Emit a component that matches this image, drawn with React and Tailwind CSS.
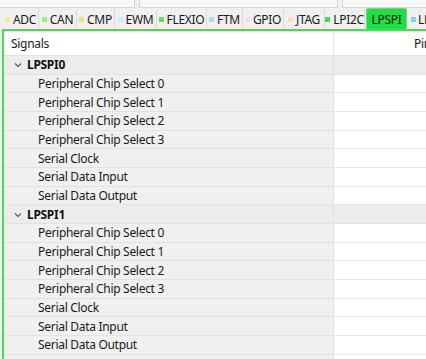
import React from "react";

const tabs = [
  { n: "ADC", c: "bg-[#eeee88]", w: "w-[36px]" },
  { n: "CAN", c: "bg-[#99ee88]", w: "w-[38px]" },
  { n: "CMP", c: "bg-[#eedd88]", w: "w-[38px]" },
  { n: "EWM", c: "bg-[#ccf0f8]", w: "w-[42px]" },
  { n: "FLEXIO", c: "bg-[#66dd55]", w: "w-[50px]" },
  { n: "FTM", c: "bg-[#aaddf8]", w: "w-[36px]" },
  { n: "GPIO", c: "bg-[#eeddf5]", w: "w-[41px]" },
  { n: "JTAG", c: "bg-[#f8dcc4]", w: "w-[41px]" },
  { n: "LPI2C", c: "bg-[#44dd44]", w: "w-[40px]" },
];

const signals = [
  "Peripheral Chip Select 0",
  "Peripheral Chip Select 1",
  "Peripheral Chip Select 2",
  "Peripheral Chip Select 3",
  "Serial Clock",
  "Serial Data Input",
  "Serial Data Output",
];

function Chevron() {
  return (
    <svg width="8" height="6" viewBox="0 0 8 6" className="mr-[5px]">
      <path d="M1 1.5 L4 4.5 L7 1.5" fill="none" stroke="#555" strokeWidth="1.1" />
    </svg>
  );
}

function Row({ children }) {
  return (
    <div className="flex h-[18.67px]">
      <div className="flex w-[330px] items-center border-r border-b border-[#e2e2e2] bg-[#f0f0f0] pt-[1px] pl-[34px] text-[#1a1a1a]">
        {children}
      </div>
      <div className="flex-1 border-b border-[#e6e6e6] bg-white" />
    </div>
  );
}

function Group({ name }) {
  return (
    <>
      <div className="flex h-[18.67px] border-b border-[#e2e2e2] bg-[#ececec]">
        <div className="flex w-[330px] items-center border-r border-[#e2e2e2] pt-[1px] pl-[10px] font-bold text-[#111]">
          <Chevron />
          {name}
        </div>
        <div className="flex-1" />
      </div>
      {signals.map((s) => (
        <Row key={s}>{s}</Row>
      ))}
    </>
  );
}

export default function App() {
  return (
    <div
      className="h-[359px] w-[426px] overflow-hidden bg-[#f0f0f0] text-[12px] leading-none tracking-[-0.3px]"
      style={{ fontFamily: '"Noto Sans", "Open Sans", sans-serif' }}
    >
      <div className="flex h-[8px]">
        <div className="w-[135px] border-r border-b border-[#d6d6d6] bg-[#f7f7f7]" />
        <div className="ml-[4px] w-[199px] border-r border-b border-l border-[#d6d6d6] bg-[#f7f7f7]" />
        <div className="ml-[4px] flex-1 border-b border-l border-[#d6d6d6] bg-[#f7f7f7]" />
      </div>
      <div className="flex h-[21px] items-end overflow-hidden pl-[3px]">
        {tabs.map((t) => (
          <div
            key={t.n}
            className={`flex h-[20px] shrink-0 items-center justify-center border-r border-[#d9d9d9] pt-[1px] text-[#1a1a1a] ${t.w}`}
          >
            <span className={`mr-[3px] inline-block h-[5px] w-[5px] ${t.c}`} />
            <span>{t.n}</span>
          </div>
        ))}
        <div className="ml-[1px] flex h-[21px] w-[41px] shrink-0 items-center justify-center rounded-t-[2px] border border-b-0 border-[#7fcf8a] bg-[#22dd44] pt-[1px] text-[#111]">
          LPSPI
        </div>
        <div className="flex h-[20px] shrink-0 items-center pt-[1px] pl-[4px] text-[#1a1a1a]">
          <span className="mr-[2px] inline-block h-[5px] w-[5px] bg-[#88ccf0]" />
          <span>LPUART</span>
        </div>
      </div>
      <div className="ml-[2px] h-[330px] overflow-hidden border-t-2 border-l-2 border-[#44dd55] bg-white">
        <div className="mt-[1px] flex h-[24px] border-b border-[#e2e2e2] bg-white">
          <div className="flex w-[330px] items-center border-r border-[#e6e6e6] pt-[1px] pl-[7px] text-[#1a1a1a]">
            Signals
          </div>
          <div className="flex flex-1 items-center overflow-hidden pt-[1px] pl-[80px] whitespace-nowrap text-[#1a1a1a]">
            Pin
          </div>
        </div>
        <Group name="LPSPI0" />
        <Group name="LPSPI1" />
        <Row>{""}</Row>
      </div>
    </div>
  );
}
